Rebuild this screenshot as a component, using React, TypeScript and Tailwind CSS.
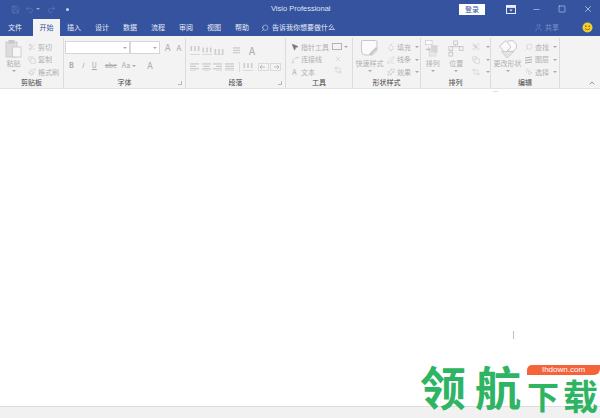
import React from "react";
import {
  ChevronUp,
  Copy,
  Crop,
  Droplet,
  Group,
  Minus,
  MousePointer2,
  MousePointerClick,
  Paintbrush,
  PenLine,
  Redo2,
  Save,
  Scissors,
  Search,
  Sparkles,
  Spline,
  Square,
  Undo2,
  User,
  X,
} from "lucide-react";

const FONT = "font-['Noto_Sans_CJK_SC','Liberation_Sans',sans-serif]";
const TABS = ["插入", "设计", "数据", "流程", "审阅", "视图", "帮助"];
const DIM = "#bababa";

const Caret = ({ className = "" }: { className?: string }) => (
  <span className={`inline-block w-0 h-0 border-x-[2px] border-x-transparent border-t-[2px] border-t-[#aaaaaa] ${className}`} />
);

const SmallRow = ({
  icon,
  label,
  caret,
}: {
  icon: React.ReactNode;
  label: string;
  caret?: boolean;
}) => (
  <div className="flex items-center gap-[2px] h-[12.5px] text-[7px] text-[#b0b0b0] leading-none">
    <span className="w-[9px] flex justify-center">{icon}</span>
    <span>{label}</span>
    {caret && <Caret className="ml-[2px]" />}
  </div>
);

const BigButton = ({
  icon,
  label,
  width,
}: {
  icon: React.ReactNode;
  label: string;
  width: string;
}) => (
  <div className={`flex flex-col items-center ${width} text-[7px] text-[#b0b0b0] leading-none`}>
    <div className="h-[21px] flex items-center">{icon}</div>
    <span className="mt-[1px]">{label}</span>
    <Caret className="mt-[3px]" />
  </div>
);

const RibbonGroup = ({
  width,
  label,
  launcher,
  children,
}: {
  width: string;
  label: string;
  launcher?: boolean;
  children: React.ReactNode;
}) => (
  <div className={`relative flex flex-col shrink-0 h-full border-r border-[#dcdcdc] ${width}`}>
    <div className="flex-1 flex min-h-0">{children}</div>
    <div className="h-[12px] text-center text-[7px] leading-[12px] text-[#444444]">{label}</div>
    {launcher && (
      <span className="absolute right-[3px] bottom-[3px] w-[4px] h-[4px] border-r border-b border-[#b8b8b8]" />
    )}
  </div>
);

const ico = (Icon: React.ElementType, size = 8) => (
  <Icon size={size} color={DIM} strokeWidth={1.3} />
);

const Letter = ({ children, className = "" }: { children: React.ReactNode; className?: string }) => (
  <span className={`text-[7px] leading-none text-[#a8a8a8] ${className}`}>{children}</span>
);

// text alignment glyph, drawn as bars
const Lines = ({ rows, className = "" }: { rows: number[][]; className?: string }) => (
  <svg width="9" height="8" viewBox="0 0 9 8" className={className}>
    {rows.map(([x, w], i) => (
      <rect key={i} x={x} y={i * 2.4 + 0.4} width={w} height="1.1" fill="#c6c6c6" />
    ))}
  </svg>
);

const VBars = ({ offset, className = "" }: { offset: number; className?: string }) => (
  <svg width="10" height="9" viewBox="0 0 10 9" className={className}>
    <rect x="0.5" y={offset} width="1.6" height="5" fill="#cdcdcd" />
    <rect x="4.2" y={offset} width="1.6" height="5" fill="#cdcdcd" />
    <rect x="7.9" y={offset} width="1.6" height="5" fill="#cdcdcd" />
    <path d="M0 8.5H10" stroke="#d2d2d2" strokeWidth="0.8" />
  </svg>
);

const IndentBox = ({ flip }: { flip?: boolean }) => (
  <svg width="11" height="8" viewBox="0 0 11 8" className={flip ? "-scale-x-100" : ""}>
    <rect x="0.5" y="0.5" width="10" height="7" fill="none" stroke="#d4d4d4" strokeWidth="0.8" />
    <path d="M2 4H7M4 2L2 4L4 6" fill="none" stroke="#b6b6b6" strokeWidth="0.9" />
  </svg>
);

const PasteIcon = () => (
  <svg width="17" height="19" viewBox="0 0 17 19">
    <rect x="1" y="3" width="11" height="15" fill="#dcdcdc" stroke="#cecece" />
    <rect x="3.5" y="1" width="6" height="3.5" fill="#c8c8c8" />
    <rect x="7.5" y="8" width="8.5" height="10" fill="#f7f7f7" stroke="#c6c6c6" strokeWidth="0.8" />
  </svg>
);

const QuickStyleIcon = () => (
  <svg width="19" height="19" viewBox="0 0 19 19">
    <path d="M2 1.5H15.5Q17 1.5 17 3V9Q17 14 11 16H5Q1.5 16 1.5 12V2Z" fill="#fafafa" stroke="#c8c8c8" />
    <path d="M9 15L16 8L17.5 9.5L11 16.5Z" fill="#c6c6c6" />
  </svg>
);

const ArrangeIcon = () => (
  <svg width="16" height="17" viewBox="0 0 19 20">
    <rect x="0.5" y="0.5" width="8" height="5" fill="#fafafa" stroke="#cacaca" strokeWidth="0.8" />
    <rect x="7" y="6" width="8" height="9" fill="#d6d6d6" />
    <path d="M1 11H6M4 9L6 11L4 13" fill="none" stroke="#aeaeae" strokeWidth="1" />
    <rect x="5" y="14" width="8" height="5" fill="#e8e8e8" stroke="#cecece" strokeWidth="0.7" />
  </svg>
);

const PositionIcon = () => (
  <svg width="16" height="17" viewBox="0 0 17 18" fill="none" stroke="#c4c4c4" strokeWidth="0.9">
    <rect x="6" y="1" width="4" height="4" />
    <rect x="1" y="7" width="4" height="4" />
    <rect x="12" y="7" width="4" height="4" />
    <rect x="1" y="13" width="4" height="4" />
    <path d="M8 5V7H3M8 7H14M3 11V13" />
  </svg>
);

const ChangeShapeIcon = () => (
  <svg width="20" height="20" viewBox="0 0 20 20">
    <circle cx="13" cy="7" r="5.5" fill="#fafafa" stroke="#c8c8c8" />
    <path d="M1.5 7L8 1.5L13 8L7 14Z" fill="#fafafa" stroke="#c8c8c8" />
    <path d="M9 19L3.5 12.5H16Z" fill="#e4e4e4" stroke="#c8c8c8" strokeWidth="0.8" />
  </svg>
);

const LayersIcon = () => (
  <svg width="9" height="8" viewBox="0 0 9 8" fill="none" stroke="#aeaeae" strokeWidth="1">
    <path d="M1 2L8 1M1 4.5L8 3.5M1 7L8 6" />
  </svg>
);

const RibbonOptionsIcon = () => (
  <svg width="10" height="9" viewBox="0 0 10 9">
    <rect x="0.5" y="0.5" width="9" height="8" fill="none" stroke="#e8ecf6" />
    <rect x="0.5" y="0.5" width="9" height="2.4" fill="#e8ecf6" />
    <path d="M3.4 4.5H6.6L5 6.6Z" fill="#e8ecf6" />
  </svg>
);

export default function App() {
  return (
    <div className={`relative w-[600px] h-[418px] overflow-hidden bg-white flex flex-col ${FONT}`}>
      {/* title bar */}
      <div className="h-[18px] shrink-0 bg-[#35539f] flex items-center relative">
        <div className="flex items-center pl-[11px]">
          <Save size={9} color="#6d84bd" strokeWidth={1.3} />
          <Undo2 size={9} color="#6d84bd" strokeWidth={1.3} className="ml-[5px]" />
          <Caret className="ml-[2px]" />
          <Redo2 size={9} color="#6d84bd" strokeWidth={1.3} className="ml-[7px]" />
          <span className="ml-[10px] w-[3px] h-[3px] rounded-full bg-[#c8d3ea]" />
        </div>
        <span className="absolute left-[271px] top-[4px] text-[7.5px] leading-[10px] text-[#dfe5f3] font-['Liberation_Sans',sans-serif]">
          Visio Professional
        </span>
        <div className="ml-auto flex items-center">
          <div className="w-[26px] h-[11px] mr-[13px] bg-white text-[#35539f] text-[7px] leading-[11px] text-center">
            登录
          </div>
          <span className="w-[25px] flex justify-center"><RibbonOptionsIcon /></span>
          <span className="w-[26px] flex justify-center"><Minus size={9} color="#e8ecf6" strokeWidth={1.5} /></span>
          <span className="w-[26px] flex justify-center"><Square size={8} color="#e8ecf6" strokeWidth={1.5} /></span>
          <span className="w-[26px] mr-[-1px] flex justify-center"><X size={10} color="#e8ecf6" strokeWidth={1.5} /></span>
        </div>
      </div>

      {/* tabs */}
      <div className="h-[18px] shrink-0 bg-[#35539f] flex items-end text-[7px] text-[#e8ecf6] pl-[1px] leading-[17px]">
        <div className="w-[28px] text-center h-[17px]">文件</div>
        <div className="ml-[4px] w-[27px] text-center h-[17px] bg-[#f3f3f3] text-[#35539f]">开始</div>
        {TABS.map((tab) => (
          <div key={tab} className="w-[28px] text-center h-[17px]">
            {tab}
          </div>
        ))}
        <div className="ml-[5px] h-[17px] flex items-center gap-[3px]">
          <Search size={8} color="#e8ecf6" strokeWidth={1.5} className="-scale-x-100" />
          <span>告诉我你想要做什么</span>
        </div>
        <div className="ml-auto h-[17px] flex items-center gap-[2px] text-[#7f93c6]">
          <User size={9} color="#7f93c6" strokeWidth={1.3} />
          <span>共享</span>
          <svg width="11" height="11" viewBox="0 0 11 11" className="ml-[21px] mr-[7px]">
            <circle cx="5.5" cy="5.5" r="5" fill="#f4cf2f" />
            <circle cx="3.8" cy="4.2" r="0.8" fill="#6b5a12" />
            <circle cx="7.2" cy="4.2" r="0.8" fill="#6b5a12" />
            <path d="M3 6.6 Q5.5 9.2 8 6.6" fill="none" stroke="#6b5a12" strokeWidth="0.8" />
          </svg>
        </div>
      </div>

      {/* ribbon */}
      <div className="relative h-[53px] shrink-0 bg-[#f3f3f3] border-b border-[#e2e2e2] flex pt-[2px]">
        <RibbonGroup width="w-[64px]" label="剪贴板">
          <BigButton width="w-[27px]" label="粘贴" icon={<PasteIcon />} />
          <div className="pt-[3px]">
            <SmallRow icon={ico(Scissors)} label="剪切" />
            <SmallRow icon={ico(Copy)} label="复制" />
            <SmallRow icon={ico(Paintbrush)} label="格式刷" />
          </div>
        </RibbonGroup>

        <RibbonGroup width="w-[122px]" label="字体" launcher>
          <div className="flex flex-col pl-[1px] pt-[3px]">
            <div className="flex items-center h-[13px]">
              <div className="w-[65px] h-[13px] bg-white border border-[#d6d6d6] flex items-center justify-end pr-[2px]"><Caret /></div>
              <div className="w-[30px] h-[13px] bg-white border border-[#d6d6d6] flex items-center justify-end pr-[2px]"><Caret /></div>
              <Letter className="ml-[5px] text-[9px]">A</Letter>
              <Letter className="ml-[6px] text-[8px]">A</Letter>
            </div>
            <div className="flex items-center h-[13px] mt-[5px] pl-[4px]">
              <Letter className="font-bold">B</Letter>
              <Letter className="italic ml-[8px]">I</Letter>
              <Letter className="underline ml-[8px]">U</Letter>
              <Letter className="line-through ml-[8px] text-[6.5px]">abc</Letter>
              <Letter className="ml-[5px]">Aa</Letter>
              <Caret className="ml-[2px]" />
              <Letter className="ml-[11px] text-[9px]">A</Letter>
            </div>
          </div>
        </RibbonGroup>

        <RibbonGroup width="w-[100px]" label="段落" launcher>
          <div className="flex flex-col pl-[4px] pt-[6px]">
            <div className="flex items-center h-[13px]">
              <VBars offset={0} />
              <VBars offset={1.5} className="ml-[2px]" />
              <VBars offset={3} className="ml-[2px]" />
              <Lines rows={[[2, 7], [2, 7], [2, 7]]} className="ml-[7px]" />
              <Letter className="ml-[9px] text-[10px]">A</Letter>
            </div>
            <div className="flex items-center h-[13px] mt-[3px]">
              <Lines rows={[[0, 9], [0, 6], [0, 9], [0, 6]]} />
              <Lines rows={[[0, 9], [1.5, 6], [0, 9], [1.5, 6]]} className="ml-[3px]" />
              <Lines rows={[[0, 9], [3, 6], [0, 9], [3, 6]]} className="ml-[2px]" />
              <Lines rows={[[0, 9], [0, 9], [0, 9], [0, 9]]} className="ml-[3px]" />
              <span className="ml-[5px] h-[10px] border-l border-[#dcdcdc]" />
              <VBars offset={1} className="ml-[3px]" />
              <span className="ml-[5px]"><IndentBox /></span>
              <span className="ml-[1px]"><IndentBox flip /></span>
            </div>
          </div>
        </RibbonGroup>

        <RibbonGroup width="w-[67px]" label="工具">
          <div className="pl-[4px] pt-[3px] w-[46px]">
            <SmallRow icon={<MousePointer2 size={8} color="#777777" fill="#777777" />} label="指针工具" />
            <SmallRow icon={ico(Spline)} label="连接线" />
            <SmallRow icon={<Letter>A</Letter>} label="文本" />
          </div>
          <div className="flex flex-col items-center pt-[3px]">
            <div className="h-[12.5px] flex items-center gap-[2px]">
              <span className="w-[10px] h-[7px] border border-[#b4b4b4]" />
              <Caret />
            </div>
            <div className="h-[12.5px] flex items-center pr-[4px]">{ico(X)}</div>
            <div className="h-[12.5px] flex items-center pr-[4px]">{ico(Crop)}</div>
          </div>
        </RibbonGroup>

        <RibbonGroup width="w-[68px]" label="形状样式">
          <BigButton width="w-[33px]" label="快速样式" icon={<QuickStyleIcon />} />
          <div className="pt-[3px]">
            <SmallRow icon={ico(Droplet)} label="填充" caret />
            <SmallRow icon={ico(PenLine)} label="线条" caret />
            <SmallRow icon={ico(Sparkles)} label="效果" caret />
          </div>
        </RibbonGroup>

        <RibbonGroup width="w-[70px]" label="排列">
          <BigButton width="w-[24px]" label="排列" icon={<ArrangeIcon />} />
          <BigButton width="w-[24px]" label="位置" icon={<PositionIcon />} />
          <div className="pt-[3px] pl-[3px]">
            <SmallRow icon={ico(Group)} label="" caret />
            <SmallRow icon={ico(Copy)} label="" caret />
            <SmallRow icon={ico(Crop)} label="" caret />
          </div>
        </RibbonGroup>

        <RibbonGroup width="w-[69px]" label="编辑">
          <BigButton width="w-[33px]" label="更改形状" icon={<ChangeShapeIcon />} />
          <div className="pt-[3px]">
            <SmallRow icon={<Search size={8} color={DIM} strokeWidth={1.3} className="-scale-x-100" />} label="查找" caret />
            <SmallRow icon={<LayersIcon />} label="图层" caret />
            <SmallRow icon={ico(MousePointerClick)} label="选择" caret />
          </div>
        </RibbonGroup>

        <ChevronUp size={8} color="#666666" strokeWidth={2} className="absolute right-[4px] bottom-[1px]" />
      </div>

      {/* canvas */}
      <div className="flex-1 bg-white" />
      <div className="h-[12px] shrink-0 bg-[#f1f1f1] border-t border-[#dddddd]" />

      {/* stray marks on the canvas */}
      <span className="absolute left-[513px] top-[331px] w-[1px] h-[8px] bg-[#bdbdbd]" />
      <span className="absolute left-[493px] top-[91px] w-[5px] h-[1px] bg-[#dddddd]" />

      {/* watermark */}
      <div className="absolute left-[420px] top-[358px] h-[54px] flex items-end font-bold text-[#2fb463] whitespace-nowrap">
        <span className="text-[46px] leading-[54px]">领</span>
        <span className="ml-[9px] text-[46px] leading-[54px]">航</span>
        <span className="ml-[6px] text-[32px] leading-[30px] mb-[2px]">下</span>
        <span className="ml-[4px] text-[35px] leading-[32px] mb-[1px]">载</span>
      </div>
      <div className="absolute left-[527px] top-[365px] w-[73px] h-[10px] rounded-tl-[5px] rounded-br-[6px] bg-[#f4633a] text-white text-[8px] leading-[10px] text-center font-['Liberation_Sans',sans-serif]">
        Ihdown.com
      </div>
    </div>
  );
}
